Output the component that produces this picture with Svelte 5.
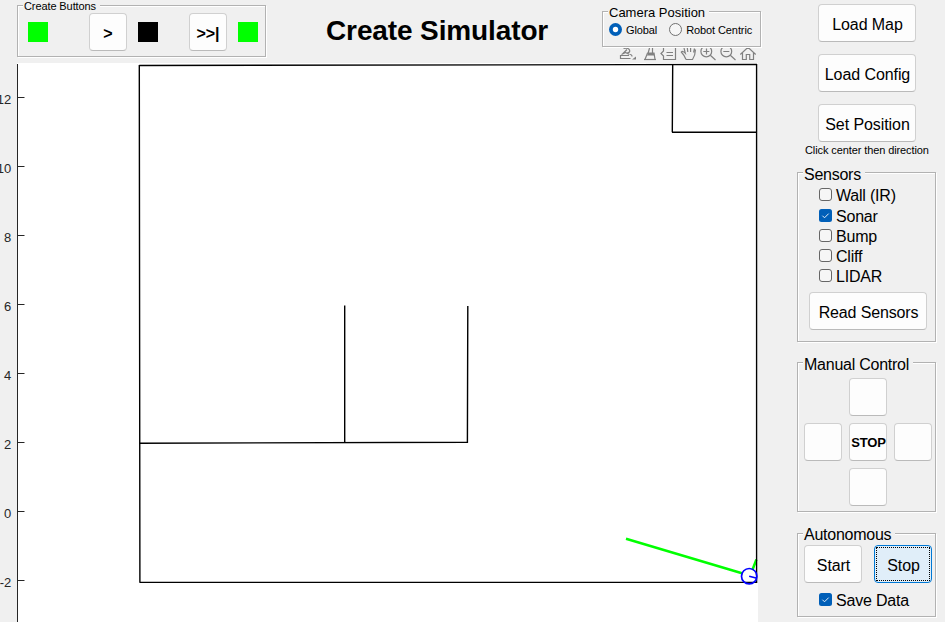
<script>
  let sensors = $state([
    { name: 'Wall (IR)', on: false },
    { name: 'Sonar', on: true },
    { name: 'Bump', on: false },
    { name: 'Cliff', on: false },
    { name: 'LIDAR', on: false }
  ]);
  let saveData = $state(true);
  let camera = $state('Global');
  const ticks = [
    { v: '12', y: 97.5 }, { v: '10', y: 166.5 }, { v: '8', y: 235.5 }, { v: '6', y: 304.5 },
    { v: '4', y: 373.5 }, { v: '2', y: 442.5 }, { v: '0', y: 511.5 }, { v: '-2', y: 580.5 }
  ];
</script>

{#snippet check(label, on, toggle)}
  <button class="check" role="checkbox" aria-checked={on} onclick={toggle}>
    <svg width="13" height="13" viewBox="0 0 13 13">
      {#if on}
        <rect width="13" height="13" rx="2.5" fill="#005fb8" />
        <path d="M3.4 6.7 5.5 8.8 9.7 4.6" fill="none" stroke="#e4effa" />
      {:else}
        <rect x=".5" y=".5" width="12" height="12" rx="2.5" fill="#f6f6f6" stroke="#666" />
      {/if}
    </svg>
    <span>{label}</span>
  </button>
{/snippet}

<div class="app">
  <main>
    <header>
      <section class="panel create">
        <h2>Create Buttons</h2>
        <div class="row">
          <i class="led on"></i>
          <button class="btn small">&gt;</button>
          <i class="led"></i>
          <button class="btn small">&gt;&gt;|</button>
          <i class="led on"></i>
        </div>
      </section>
      <h1>Create Simulator</h1>
      <section class="panel camera">
        <h2>Camera Position</h2>
        <div class="row">
          {#each ['Global', 'Robot Centric'] as c}
            <button class="radio" role="radio" aria-checked={camera === c} onclick={() => (camera = c)}>
              <svg width="13" height="13" viewBox="0 0 13 13">
                {#if camera === c}
                  <circle cx="6.5" cy="6.5" r="6.5" fill="#005fb8" /><circle cx="6.5" cy="6.5" r="2.7" fill="#fff" />
                {:else}
                  <circle cx="6.5" cy="6.5" r="6" fill="#f6f6f6" stroke="#707070" />
                {/if}
              </svg>
              <span>{c}</span>
            </button>
          {/each}
        </div>
      </section>
    </header>

    <svg class="plot" width="758" height="559" viewBox="0 63 758 559">
      <rect x="17" y="63" width="741" height="559" fill="#fff" />
      <g stroke="#262626" fill="none">
        <path d="M17.5 64V622" />
        {#each ticks as t}<path d="M18 {t.y}h6.5" />{/each}
      </g>
      <g class="ticks">
        {#each ticks as t}<text x="11.3" y={t.y + 6}>{t.v}</text>{/each}
      </g>
      <path d="M626 538.7 742 573.3M752.4 570 756.4 559.5" stroke="#0f0" stroke-width="2.5" fill="none" />
      <g stroke="#000" stroke-width="1.4" fill="none">
        <path d="M139.3 65.5 757 64.4M139.3 65 139.9 582.5M139.5 582.4H757M756.6 64V583" />
        <path d="M672.7 64 672.3 132.2M672 132.3H757" />
        <path d="M139.6 443.2 467.4 442.3 467.8 306M344.7 305.5V442.8" />
      </g>
      <circle cx="749.2" cy="576.2" r="7.7" fill="none" stroke="#00f" stroke-width="1.7" />
      <path d="M749.2 576.2 757 578.3" stroke="#00f" stroke-width="1.7" />
    </svg>

    <svg class="tools" width="140" height="15" viewBox="618 48 140 15" fill="none" stroke="#808080" stroke-width="1.2">
      <path d="M623.5 48.5q5-1 6 1.5t-2.5 3M627 49.5l-4.5 4.5M621.5 54.5l4-2 4 2M629 55.5h-8.5v3h10M630 54.5q2 0 2 2" />
      <path d="M632 59.5h4v-3z" fill="#808080" stroke="none" />
      <path d="M649.5 48l-1.2 4.5M652.5 48v4.5M647.5 53h6.5l1 6.5h-10z" />
      <path d="M648 53h6l.4 2.5h-7.4z" fill="#808080" stroke="none" />
      <path d="M644 59.5h12" />
      <path d="M663.5 48v3l-2.5 2.5 2.5 2.5v3.5h12V48M666.5 52.5h6.5M666.5 55.5h6.5" />
      <path d="M686 59.5q-1-3.5-4.7-7.5 1.2-1.7 4 1.2L684 48M687.3 48l.5 4M690.6 48v4M694.5 48.5l-.9 4M686 59.5h6.5q2.8-4 3-10" />
      <circle cx="706.3" cy="51.4" r="5.4" /><path d="M703.3 51.5h6M706.5 48.5v6M710.3 55.3l5.2 4.7" />
      <circle cx="726.3" cy="51.4" r="5.4" /><path d="M723.3 51.5h6M730.3 55.3l5.2 4.7" />
      <path d="M740.3 54.5 748 47.3l7.7 7.2M742.5 53v6.5h3.8v-5h3.4v5h3.8V53" />
    </svg>
  </main>

  <aside>
    <div class="setup">
      <button class="btn">Load Map</button>
      <button class="btn">Load Config</button>
      <button class="btn">Set Position</button>
    </div>
    <p>Click center then direction</p>
    <section class="panel sensors">
      <h2>Sensors</h2>
      <div class="checks">
        {#each sensors as s}{@render check(s.name, s.on, () => (s.on = !s.on))}{/each}
      </div>
      <button class="btn read">Read Sensors</button>
    </section>
    <section class="panel manual">
      <h2>Manual Control</h2>
      <div class="pad">
        <button class="btn up" aria-label="Forward"></button>
        <button class="btn left" aria-label="Left"></button>
        <button class="btn mid">STOP</button>
        <button class="btn right" aria-label="Right"></button>
        <button class="btn down" aria-label="Back"></button>
      </div>
    </section>
    <section class="panel auto">
      <h2>Autonomous</h2>
      <div class="row">
        <button class="btn">Start</button>
        <button class="btn focused">Stop</button>
      </div>
      {@render check('Save Data', saveData, () => (saveData = !saveData))}
    </section>
  </aside>
</div>

<style>
  .app { display: flex; width: 945px; height: 622px; overflow: hidden; background: #f0f0f0; color: #000; font: 16px/18px "Liberation Sans", Arial, sans-serif; }
  .app * { box-sizing: border-box; }
  button { font: inherit; color: inherit; padding: 0; margin: 0; border: 0; background: none; white-space: nowrap; }
  main { position: relative; width: 758px; flex: none; }
  header { display: flex; height: 63px; width: 770px; padding-left: 17px; }
  h1 { margin: 15px 0 0; width: 336px; padding-left: 60px; font-size: 28px; line-height: 32px; letter-spacing: -.12px; white-space: nowrap; }
  .panel { position: relative; border: 1px solid #b2b2b2; box-shadow: 1px 1px 0 #fff, inset 1px 1px 0 #fff; }
  h2 { position: absolute; left: 5px; top: -8px; margin: 0; padding: 1px 4px 0 1px; background: #f0f0f0; font-size: 16px; font-weight: 400; line-height: 18px; letter-spacing: -.25px; white-space: nowrap; }
  .btn { display: flex; align-items: center; justify-content: center; height: 38px; background: #fdfdfd; border: 1px solid #d0d0d0; border-bottom-color: #bababa; border-radius: 4px; padding: 4px 0 0 1px; letter-spacing: -.08px; }
  .row { display: flex; }

  .create { width: 249px; height: 52px; margin-top: 5px; flex: none; }
  .create h2 { font-size: 11px; line-height: 12px; top: -6px; padding-top: 0; letter-spacing: -.1px; }
  .create .row { align-items: center; padding: 7px 0 0 10px; }
  .led { width: 20px; height: 20px; background: #000; flex: none; }
  .led.on { background: #0f0; }
  .small { width: 38px; margin: 0 11px; font-size: 16px; font-weight: 700; flex: none; padding: 4px 0 0; }
  .led + .small { margin-left: 41px; }
  .led:nth-child(3) + .small { margin-left: 31px; }

  .camera { width: 159px; height: 36px; margin-top: 11px; flex: none; background: #f0f0f0; z-index: 2; }
  .camera h2 { font-size: 13px; line-height: 14px; top: -7px; letter-spacing: 0; }
  .camera .row { padding: 11px 0 0 6px; gap: 12px; font-size: 11px; line-height: 13px; }
  .radio, .check { display: flex; align-items: center; }
  .radio { gap: 4px; letter-spacing: -.1px; }
  .radio span { padding-top: 1px; }
  .radio svg { margin-bottom: 1px; }
  .plot { display: block; }
  .ticks { font-size: 13px; fill: #262626; text-anchor: end; }
  .tools { position: absolute; left: 618px; top: 48px; }

  aside { width: 187px; padding: 4px 0 0 39px; flex: none; }
  .setup { display: flex; flex-direction: column; gap: 12px; padding-left: 21px; }
  .setup .btn { width: 98px; }
  p { margin: 2px 0 0 8px; font-size: 11px; line-height: 13px; letter-spacing: -.1px; white-space: nowrap; }
  aside .panel { width: 139px; }
  .sensors { height: 170px; margin-top: 15px; padding-left: 11px; }
  .checks { padding: 12px 0 0 10px; height: 119px; }
  .check { gap: 4px; height: 20px; letter-spacing: -.2px; }
  .check svg { margin-bottom: 1px; }
  .check span { padding-top: 2px; }
  .checks .check:first-child { height: 21px; padding-bottom: 1px; }
  .read { width: 118px; letter-spacing: -.15px; }
  .manual { height: 150px; margin-top: 20px; padding: 15px 0 0 6px; }
  .pad { display: grid; grid-template: repeat(3, 38px) / repeat(3, 38px); gap: 7px; grid-template-areas: ". u ." "l m r" ". d ."; }
  .up { grid-area: u; } .left { grid-area: l; } .mid { grid-area: m; font-size: 13px; font-weight: 700; padding-top: 1px; letter-spacing: -.2px; } .right { grid-area: r; } .down { grid-area: d; }
  .auto { height: 84px; margin-top: 21px; padding: 11px 0 0 6px; }
  .auto h2 { padding-top: 0; }
  .auto .row { gap: 12px; }
  .auto .btn { width: 58px; }
  .auto .check { margin: 7px 0 0 15px; }
  .focused { position: relative; background: #e0eef9; border-color: #0078d4; }
  .focused::after { content: ""; position: absolute; inset: 1px; border: 1px dotted #000; }
</style>
